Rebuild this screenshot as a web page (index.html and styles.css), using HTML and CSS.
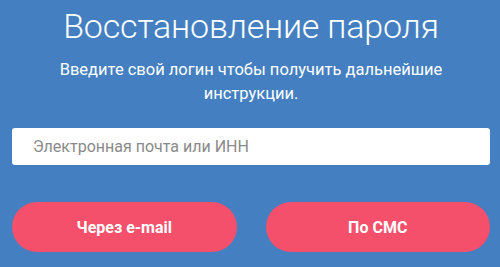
FILE: index.html
```html
<!DOCTYPE html>
<html lang="ru">
<head>
    <meta charset="UTF-8">
    <meta name="viewport" content="width=device-width, initial-scale=1.0">
    <title>Восстановление пароля</title>
    <link rel="stylesheet" href="styles.css">
</head>
<body>
    <div class="recovery">
        <h1>Восстановление пароля</h1>
        <p class="hint">Введите свой логин чтобы получить дальнейшие<br>инструкции.</p>
        <form class="recovery-form">
            <input type="text" class="field" placeholder="Электронная почта или ИНН">
            <div class="actions">
                <button type="button" class="btn">Через e-mail</button>
                <button type="button" class="btn">По СМС</button>
            </div>
        </form>
    </div>
</body>
</html>
```

FILE: styles.css
```css
body {
    margin: 0;
    font-family: Roboto, "Noto Sans", sans-serif;
    background: #447fc1;
    color: white;
}
.recovery {
    padding: 0 10px 0 12px;
    text-align: center;
}
h1 {
    margin: 0;
    padding-top: 6px;
    font-size: 34px;
    font-weight: 300;
    line-height: 40px;
    letter-spacing: -0.2px;
}
.hint {
    margin: 12px 0 0;
    font-size: 16.5px;
    line-height: 24px;
}
.recovery-form {
    margin-top: 22px;
}
.field {
    display: block;
    box-sizing: border-box;
    width: 100%;
    height: 37px;
    padding: 0 21px;
    border: none;
    border-radius: 3px;
    outline: none;
    background: white;
    font-family: inherit;
    font-size: 16px;
    color: #333;
}
.field::placeholder {
    color: #8a8a8a;
}
.actions {
    display: flex;
    gap: 29px;
    margin-top: 37px;
}
.btn {
    flex: 1;
    height: 50px;
    border: none;
    border-radius: 25px;
    background: #f4506b;
    color: white;
    font-family: inherit;
    font-size: 16px;
    font-weight: 700;
    cursor: pointer;
}
```
